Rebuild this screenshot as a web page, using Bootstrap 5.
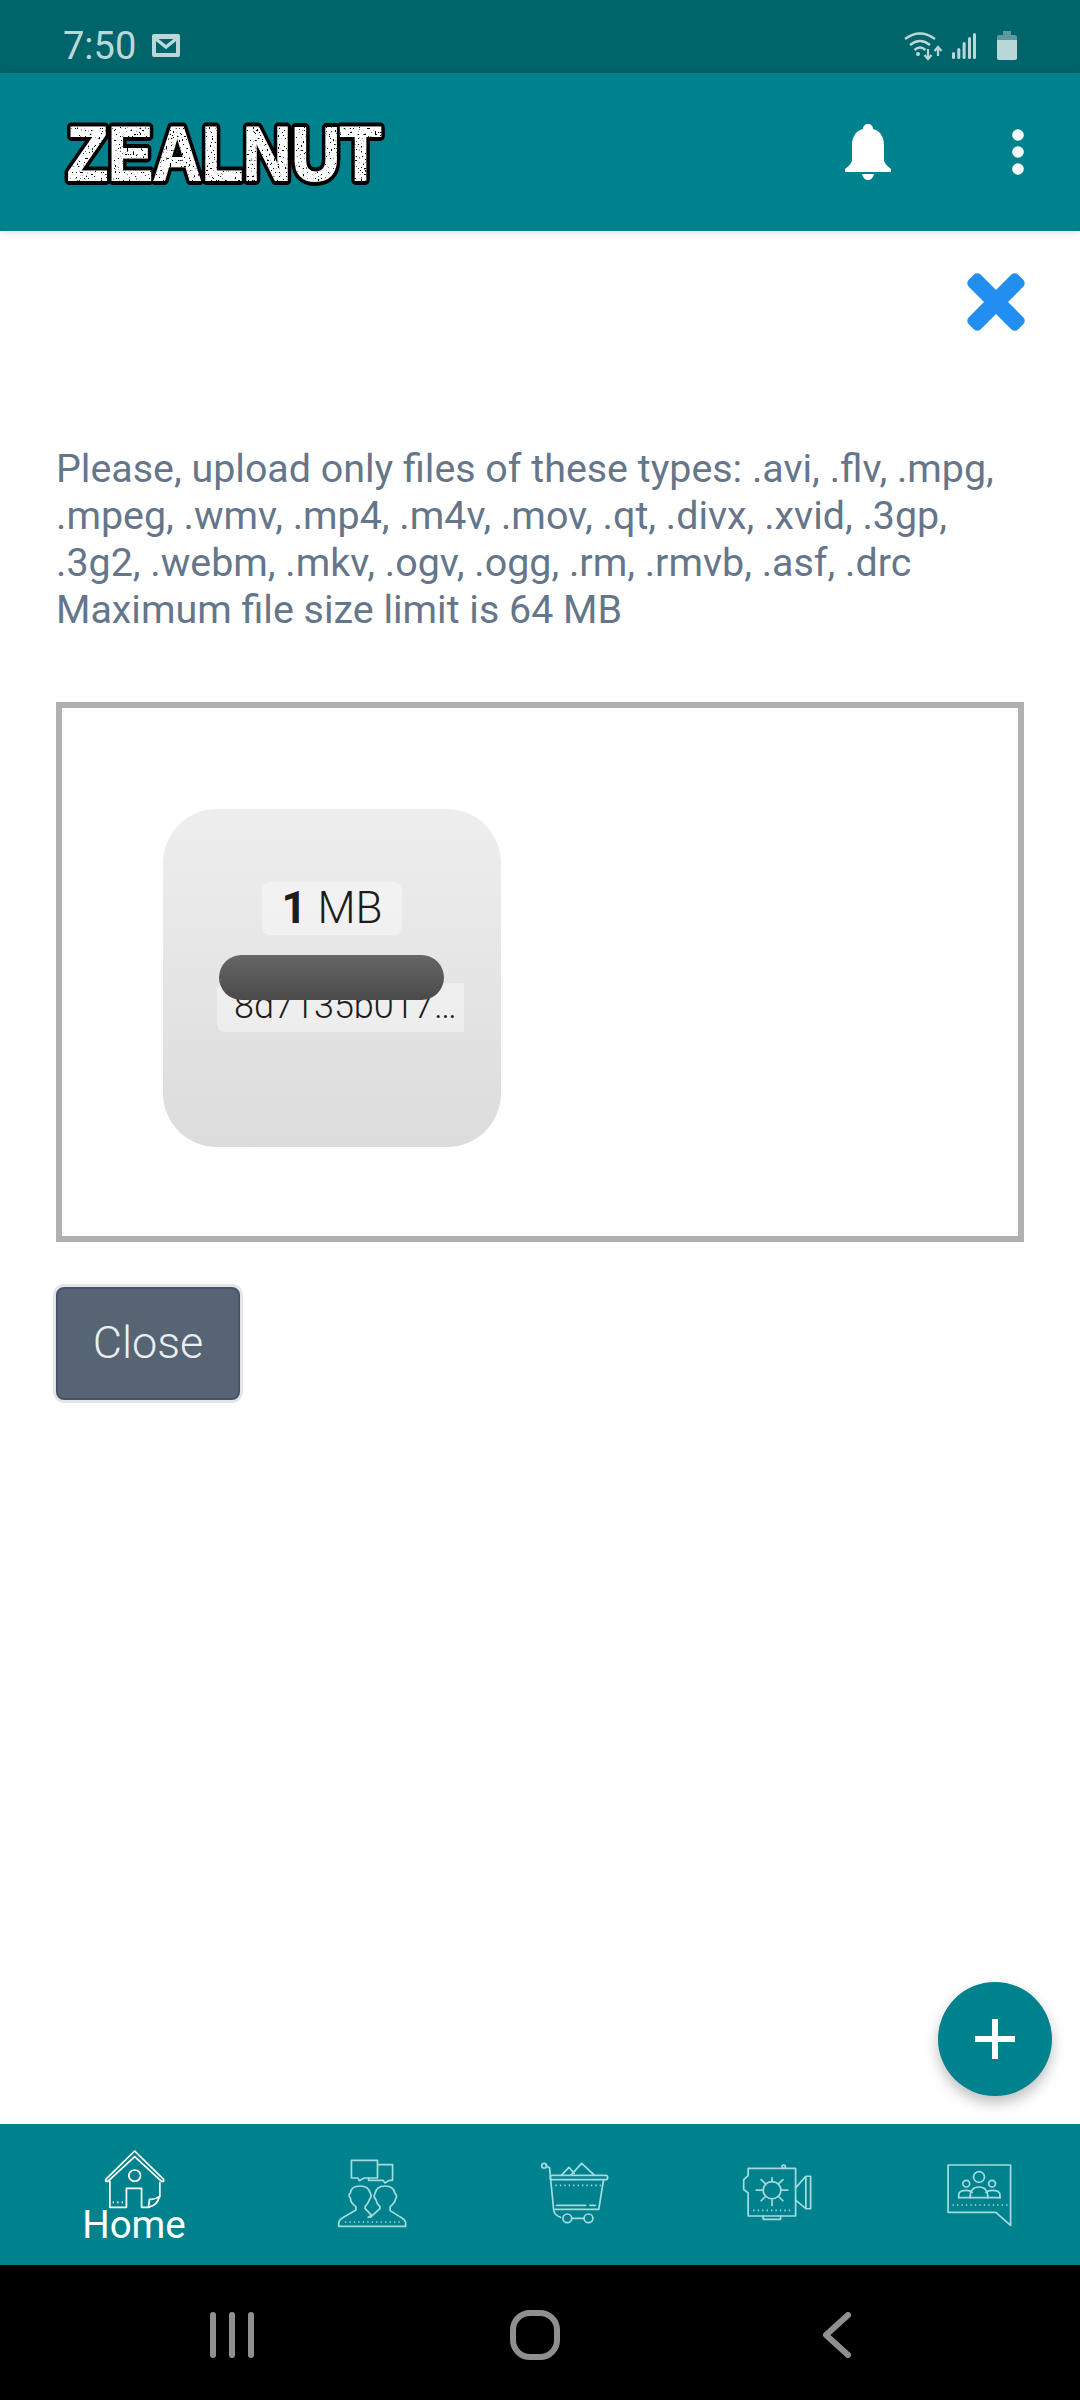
<!DOCTYPE html>
<html lang="en">
<head>
    <meta charset="UTF-8">
    <meta name="viewport" content="width=device-width, initial-scale=1.0">
    <title>Zealnut Upload</title>
    <link href="https://cdn.jsdelivr.net/npm/bootstrap@5.3.0/dist/css/bootstrap.min.css" rel="stylesheet">
    <style>
        body { width: 1080px; height: 2400px; font-family: Roboto, "Liberation Sans", sans-serif; background: #fff; overflow: hidden; }
        .status-strip { height: 73px; background: #00646b; color: #b9d8d9; padding: 18px 63px 0 63px; }
        .status-time { font-size: 38px; line-height: 1; margin-right: 16px; }
        .signal-gap { margin-right: 11px; }
        .app-strip { height: 158px; background: #00818e; padding: 0; box-shadow: 0 2px 8px rgba(0,0,0,.12); position: relative; z-index: 2; }
        .brand-logo { margin-left: 58px; padding: 0; }
        .brand-logo text { font-family: "Liberation Sans", sans-serif; font-weight: 700; font-size: 76px; }
        .bell-spot { margin-right: 121px; }
        .dots-spot { margin-right: 56px; }
        .main-area { position: relative; padding: 41px 56px 0; }
        .close-row { margin-right: -2px; margin-bottom: 113px; }
        .hint-text { font-size: 39.4px; line-height: 47px; color: #65768a; margin-bottom: 69px; }
        .drop-box { height: 540px; border: 6px solid #b0b0b0; padding: 101px 0 0 101px; margin-bottom: 45px; }
        .file-thumb { position: relative; width: 338px; height: 338px; border-radius: 54px; background: linear-gradient(#eeeeee, #dcdcdc); padding-top: 73px; }
        .size-tag { width: 140px; height: 53px; border-radius: 8px; background: rgba(255,255,255,.4); font-size: 44px; font-weight: 350; line-height: 53px; color: #1c1c1c; }
        .size-tag strong { font-weight: 700; }
        .name-tag { width: 247px; height: 49px; margin: 48px 0 0 54px; padding-left: 17px; border-radius: 8px 0 0 8px; background: rgba(255,255,255,.4); font-size: 36px; font-weight: 350; line-height: 46px; color: #1c1c1c; white-space: nowrap; }
        .name-pill { position: absolute; left: 56px; top: 146px; width: 225px; height: 45px; border-radius: 23px; background: linear-gradient(#676767, #4a4a4a); }
        .close-btn { width: 184px; height: 113px; padding: 0 0 2px; background: #566474; border: 2px solid #45536a; border-radius: 8px; box-shadow: 0 0 0 3px #e5e5e5; color: #eaeef2; font-size: 45px; font-weight: 300; }
        .add-fab { position: absolute; right: 28px; bottom: 28px; width: 114px; height: 114px; padding: 0; background: #00818e; border: 0; box-shadow: 0 7px 14px rgba(0,0,0,.25); }
        .tab-strip { height: 141px; background: #00818e; display: grid; grid-template-columns: 220px 256px 150px 253px 152px; padding: 26px 0 0 24px; }
        .tab-label { font-size: 38.5px; line-height: 36px; color: #fff; margin-top: -3px; }
        .tab-line { fill: none; stroke: #a3dcdc; stroke-width: 5; stroke-linecap: round; stroke-linejoin: round; }
        .tab-line.is-active { stroke: #fff; }
        .tab-dots { stroke-dasharray: 4 9; stroke-linecap: butt; }
        .drop-8 { margin-top: 8px; }
        .drop-10 { margin-top: 10px; }
        .drop-13 { margin-top: 13px; }
        .sys-strip { height: 135px; background: #000; padding-left: 210px; padding-top: 47px; }
        .sys-home { margin: -2px 0 0 256px; }
        .sys-back { margin-left: 263px; }
    </style>
</head>
<body class="m-0 d-flex flex-column">

    <!-- Status bar -->
    <div class="status-strip d-flex align-items-center flex-shrink-0">
        <span class="status-time">7:50</span>
        <svg width="28" height="23" viewBox="0 0 28 23">
            <rect width="28" height="23" rx="2" fill="#b9d8d9"/>
            <rect x="4" y="5" width="20" height="14" fill="#00646b"/>
            <path d="M4 5L14 13L24 5" fill="none" stroke="#b9d8d9" stroke-width="3.4"/>
        </svg>
        <div class="ms-auto d-flex align-items-center gap-2">
            <svg width="40" height="30" viewBox="0 0 40 30" fill="none" stroke="#b9d8d9">
                <path d="M1 8Q16-3 31 8M6 14Q16 6 26 14M10.5 19Q16 14 21.5 19" stroke-width="2.4"/>
                <circle cx="14" cy="23" r="2" fill="#b9d8d9" stroke="none"/>
                <path d="M24 18V28M20.5 24L24 28L27.5 24M34 25V16M30.5 20L34 16L37.5 20" stroke-width="2.2"/>
            </svg>
            <svg class="signal-gap" width="26" height="27" viewBox="0 0 26 27" fill="#b9d8d9">
                <rect x="0" y="20" width="3" height="7" rx="1.5"/>
                <rect x="5.3" y="16" width="3" height="11" rx="1.5"/>
                <rect x="10.6" y="10" width="3" height="17" rx="1.5"/>
                <rect x="16" y="5" width="3" height="22" rx="1.5"/>
                <rect x="21" y="1" width="3" height="26" rx="1.5"/>
            </svg>
            <svg width="20" height="29" viewBox="0 0 20 29">
                <path d="M6 0H14V4H18Q20 4 20 6V9H0V6Q0 4 2 4H6Z" fill="#5c9a9f"/>
                <path d="M0 9H20V27Q20 29 18 29H2Q0 29 0 27Z" fill="#b9d8d9"/>
            </svg>
        </div>
    </div>

    <!-- App bar -->
    <nav class="navbar app-strip flex-shrink-0 flex-nowrap">
        <a class="navbar-brand brand-logo" href="#">
            <svg class="d-block" width="390" height="84" viewBox="0 0 390 84">
                <defs>
                    <filter id="grit" x="0" y="0" width="100%" height="100%">
                        <feTurbulence type="fractalNoise" baseFrequency="0.5" numOctaves="3" seed="7" result="noise"/>
                        <feColorMatrix in="noise" type="matrix" values="0 0 0 0 0  0 0 0 0 0  0 0 0 0 0  0 0 0 16 -10.4" result="specks"/>
                        <feComposite in="specks" in2="SourceAlpha" operator="in" result="inked"/>
                        <feMerge><feMergeNode in="SourceGraphic"/><feMergeNode in="inked"/></feMerge>
                    </filter>
                </defs>
                <g transform="translate(9 0) scale(.886 1)">
                    <text y="70" fill="#000" stroke="#000" stroke-width="10" stroke-linejoin="round">ZEALNUT</text>
                    <text y="70" fill="#fff" stroke="#fff" stroke-width="2" filter="url(#grit)">ZEALNUT</text>
                </g>
            </svg>
        </a>
        <div class="d-flex align-items-center">
            <svg class="bell-spot" width="46" height="56" viewBox="0 0 46 56" fill="#fff">
                <path d="M23 0C26 0 28 2 28 5C36 7 39 14 39 21V36C39 39 42 42 46 45V48H0V45C4 42 7 39 7 36V21C7 14 10 7 18 5C18 2 20 0 23 0Z"/>
                <path d="M17 50H29C28 54 26 56 23 56S18 54 17 50Z"/>
            </svg>
            <svg class="dots-spot" width="12" height="46" viewBox="0 0 12 46" fill="#fff">
                <circle cx="6" cy="6" r="5.8"/>
                <circle cx="6" cy="23" r="5.8"/>
                <circle cx="6" cy="40" r="5.8"/>
            </svg>
        </div>
    </nav>

    <!-- Upload panel -->
    <main class="main-area flex-grow-1">
        <div class="close-row d-flex justify-content-end">
            <svg width="60" height="60" viewBox="0 0 60 60" fill="#228ef0">
                <rect x="-5" y="21.5" width="70" height="17" rx="5" transform="rotate(45 30 30)"/>
                <rect x="-5" y="21.5" width="70" height="17" rx="5" transform="rotate(-45 30 30)"/>
            </svg>
        </div>
        <p class="hint-text">Please, upload only files of these types: .avi, .flv, .mpg, .mpeg, .wmv, .mp4, .m4v, .mov, .qt, .divx, .xvid, .3gp, .3g2, .webm, .mkv, .ogv, .ogg, .rm, .rmvb, .asf, .drc<br>Maximum file size limit is 64 MB</p>
        <div class="drop-box">
            <div class="file-thumb">
                <div class="size-tag mx-auto text-center"><strong>1</strong> MB</div>
                <div class="name-tag">8d7135b017…</div>
                <div class="name-pill"></div>
            </div>
        </div>
        <button class="btn close-btn" type="button">Close</button>
        <button class="btn add-fab rounded-circle d-flex align-items-center justify-content-center" type="button" aria-label="Add">
            <svg width="40" height="40" viewBox="0 0 40 40" fill="#fff"><rect x="17" width="6" height="40"/><rect y="17" width="40" height="6"/></svg>
        </button>
    </main>

    <!-- Bottom tabs -->
    <nav class="tab-strip flex-shrink-0">
        <div class="d-flex flex-column align-items-center">
            <svg width="62" height="60" viewBox="0 0 180 180" preserveAspectRatio="none" class="tab-line is-active">
                <path d="M8 88L92 3L176 88V94H170L92 20L14 94H8Z"/>
                <path d="M20 94V172H68V115H112V172H132L135 148Q150 150 163 140Q160 165 132 172M165 140V98"/>
                <circle cx="92" cy="77" r="17"/>
                <path class="tab-dots" d="M28 157H64"/>
            </svg>
            <span class="tab-label">Home</span>
        </div>
        <div class="d-flex justify-content-center align-items-start">
            <svg width="72" height="72" viewBox="0 0 210 216" preserveAspectRatio="none" class="tab-line drop-8">
                <path d="M45 7H121V60H82L68 68L64 60H45Z"/>
                <path d="M122 20H165V67H155L143 75L137 67H95V60"/>
                <path d="M8 205V192Q10 185 22 178L58 156V146Q42 135 42 120Q34 112 42 105Q44 84 70 84Q96 84 100 106Q106 114 98 124Q94 136 85 146V152L104 172L94 178"/>
                <path d="M203 205V192Q201 185 189 178L158 158V146Q172 135 174 122Q180 114 172 106Q168 84 143 84Q118 84 114 106Q108 116 116 124Q118 136 128 146V152L100 178"/>
                <path d="M8 205H203"/>
                <path class="tab-dots" d="M26 192H195"/>
            </svg>
        </div>
        <div class="d-flex justify-content-center align-items-start">
            <svg width="70" height="65" viewBox="0 0 205 195" preserveAspectRatio="none" class="tab-line drop-10">
                <circle cx="12" cy="17" r="7"/>
                <path d="M18 17L28 24L40 150Q42 165 60 172"/>
                <rect x="30" y="46" width="168" height="13" rx="5"/>
                <path d="M186 60L172 148H44"/>
                <path d="M62 46L85 22L100 40M90 46L122 10L160 46"/>
                <path class="tab-dots" d="M45 76H178"/>
                <path d="M48 136H134M146 136H162"/>
                <circle cx="80" cy="175" r="13"/>
                <circle cx="142" cy="175" r="13"/>
                <path d="M93 175H129"/>
            </svg>
        </div>
        <div class="d-flex justify-content-center align-items-start">
            <svg width="70" height="58" viewBox="0 0 205 175" preserveAspectRatio="none" class="tab-line drop-13">
                <path d="M18 38L5 50V80L18 90V160H157V16H18Z"/>
                <circle cx="122" cy="11" r="5"/>
                <path d="M62 160V170H113V160"/>
                <path d="M157 75L187 40H201V138H187L157 112M187 40V138"/>
                <circle cx="88" cy="82" r="26"/>
                <path d="M88 45V56M88 108V128M42 82H62M114 82H134M56 50L69 63M107 101L120 114M56 114L69 101M107 63L120 50"/>
                <path class="tab-dots" d="M33 143H145"/>
            </svg>
        </div>
        <div class="d-flex justify-content-center align-items-start">
            <svg width="67" height="65" viewBox="0 0 195 195" preserveAspectRatio="none" class="tab-line drop-13">
                <path d="M6 6H188V187L145 148H6Z"/>
                <circle cx="96" cy="42" r="16"/>
                <circle cx="59" cy="62" r="10"/>
                <circle cx="134" cy="62" r="10"/>
                <path d="M37 104V94Q38 82 60 82Q70 82 76 88M157 104V94Q156 82 134 82Q124 82 116 88"/>
                <path d="M70 104Q70 72 96 72Q122 72 122 104"/>
                <path d="M37 104H157"/>
                <path class="tab-dots" d="M19 126H180"/>
            </svg>
        </div>
    </nav>

    <!-- System navigation -->
    <div class="sys-strip d-flex align-items-start flex-shrink-0">
        <svg width="44" height="46" viewBox="0 0 44 46" fill="#8f8f8f">
            <rect width="6" height="46" rx="3"/>
            <rect x="19" width="6" height="46" rx="3"/>
            <rect x="38" width="6" height="46" rx="3"/>
        </svg>
        <svg class="sys-home" width="50" height="50" viewBox="0 0 50 50" fill="none" stroke="#8f8f8f" stroke-width="6">
            <rect x="3" y="3" width="44" height="44" rx="17"/>
        </svg>
        <svg class="sys-back" width="28" height="46" viewBox="0 0 28 46" fill="none" stroke="#8f8f8f" stroke-width="6" stroke-linecap="round" stroke-linejoin="round">
            <path d="M25 3L3 23L25 43"/>
        </svg>
    </div>

    <script src="https://cdn.jsdelivr.net/npm/bootstrap@5.3.0/dist/js/bootstrap.bundle.min.js"></script>
</body>
</html>
